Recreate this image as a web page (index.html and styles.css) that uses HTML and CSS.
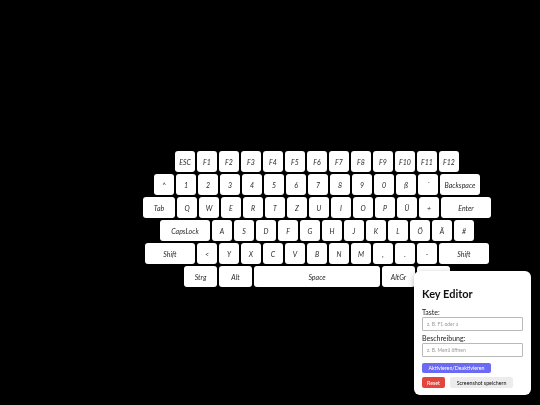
FILE: index.html
```html
<!DOCTYPE html>
<html lang="de">
<head>
<meta charset="utf-8">
<title>Keyboard</title>
<link rel="stylesheet" href="styles.css">
</head>
<body>
<main class="stage">
  <div class="keyboard">
    <div class="row">
      <div class="key">ESC</div><div class="key">F1</div><div class="key">F2</div><div class="key">F3</div><div class="key">F4</div><div class="key">F5</div><div class="key">F6</div><div class="key">F7</div><div class="key">F8</div><div class="key">F9</div><div class="key">F10</div><div class="key">F11</div><div class="key">F12</div>
    </div>
    <div class="row">
      <div class="key">^</div><div class="key">1</div><div class="key">2</div><div class="key">3</div><div class="key">4</div><div class="key">5</div><div class="key">6</div><div class="key">7</div><div class="key">8</div><div class="key">9</div><div class="key">0</div><div class="key">ß</div><div class="key">´</div><div class="key backspace">Backspace</div>
    </div>
    <div class="row">
      <div class="key tab">Tab</div><div class="key">Q</div><div class="key">W</div><div class="key">E</div><div class="key">R</div><div class="key">T</div><div class="key">Z</div><div class="key">U</div><div class="key">I</div><div class="key">O</div><div class="key">P</div><div class="key">Ü</div><div class="key">+</div><div class="key enter">Enter</div>
    </div>
    <div class="row">
      <div class="key caps">CapsLock</div><div class="key">A</div><div class="key">S</div><div class="key">D</div><div class="key">F</div><div class="key">G</div><div class="key">H</div><div class="key">J</div><div class="key">K</div><div class="key">L</div><div class="key">Ö</div><div class="key">Ä</div><div class="key">#</div>
    </div>
    <div class="row">
      <div class="key shift">Shift</div><div class="key">&lt;</div><div class="key">Y</div><div class="key">X</div><div class="key">C</div><div class="key">V</div><div class="key">B</div><div class="key">N</div><div class="key">M</div><div class="key">,</div><div class="key">.</div><div class="key">-</div><div class="key shift">Shift</div>
    </div>
    <div class="row">
      <div class="key mod">Strg</div><div class="key mod">Alt</div><div class="key space">Space</div><div class="key mod">AltGr</div><div class="key mod">Strg</div>
    </div>
  </div>
</main>

<aside class="editor">
  <h2 class="editor-title">Key Editor</h2>
  <label class="field-label" for="taste">Taste:</label>
  <input class="field-input" id="taste" type="text" placeholder="z. B. F1 oder a">
  <label class="field-label second" for="beschreibung">Beschreibung:</label>
  <input class="field-input" id="beschreibung" type="text" placeholder="z. B. Menü öffnen">
  <button class="btn btn-toggle" type="button">Aktivieren/Deaktivieren</button>
  <div class="btn-row">
    <button class="btn btn-reset" type="button">Reset</button>
    <button class="btn btn-shot" type="button">Screenshot speichern</button>
  </div>
</aside>
</body>
</html>
```

FILE: styles.css
```css
html, body {
  margin: 0;
  padding: 0;
  background: #000;
  height: 405px;
  overflow: hidden;
}

.stage {
  padding-top: 151px;
  padding-left: 93px;
  display: flex;
  justify-content: center;
}

.keyboard {
  display: flex;
  flex-direction: column;
  align-items: center;
  gap: 2px;
  will-change: transform;
}

.row {
  display: flex;
  gap: 2px;
}

.key {
  width: 20px;
  height: 21px;
  background: #fff;
  border-radius: 3px;
  display: flex;
  align-items: center;
  justify-content: center;
  font-family: "Lato", "DejaVu Sans", sans-serif;
  font-style: italic;
  font-size: 7px;
  color: #2a2a2a;
  box-sizing: border-box;
}

.backspace { width: 40px; }
.tab { width: 32px; }
.enter { width: 50px; }
.caps { width: 50px; }
.shift { width: 50px; }
.mod { width: 33px; }
.space { width: 126px; }

.editor {
  position: fixed;
  right: 9px;
  bottom: 10px;
  width: 117px;
  box-sizing: border-box;
  padding: 8px 8px 7px;
  background: #fff;
  border-radius: 6px;
  box-shadow: 0 2px 6px rgba(0, 0, 0, 0.3);
  font-family: "Lato", "DejaVu Sans", sans-serif;
  display: flex;
  flex-direction: column;
  align-items: flex-start;
  will-change: transform;
}

.editor-title {
  margin: 8px 0 8px;
  font-size: 11px;
  line-height: 13px;
  font-weight: 700;
  color: #111;
}

.field-label {
  font-size: 7px;
  line-height: 9px;
  color: #222;
}

.field-label.second {
  margin-top: 3px;
}

.field-input {
  width: 100%;
  height: 14px;
  box-sizing: border-box;
  margin: 0;
  padding: 0 4px;
  border: 1px solid #b9b9b9;
  border-radius: 1px;
  font-family: "Lato", "DejaVu Sans", sans-serif;
  font-size: 5px;
  color: #333;
  outline: none;
}

.field-input::placeholder {
  color: #9a9a9a;
}

.btn {
  border: none;
  margin: 0;
  font-family: "Lato", "DejaVu Sans", sans-serif;
  font-size: 5.3px;
  border-radius: 2px;
  padding: 0 4px;
  cursor: pointer;
}

.btn-toggle {
  margin-top: 6px;
  height: 10px;
  width: 69px;
  background: #6a6af2;
  color: #fff;
}

.btn-row {
  margin-top: 4px;
  display: flex;
  gap: 5px;
}

.btn-row .btn {
  height: 11px;
}

.btn-reset {
  width: 23px;
  background: #e2463d;
  color: #fff;
}

.btn-shot {
  width: 63px;
  background: #ececec;
  color: #111;
}
```
